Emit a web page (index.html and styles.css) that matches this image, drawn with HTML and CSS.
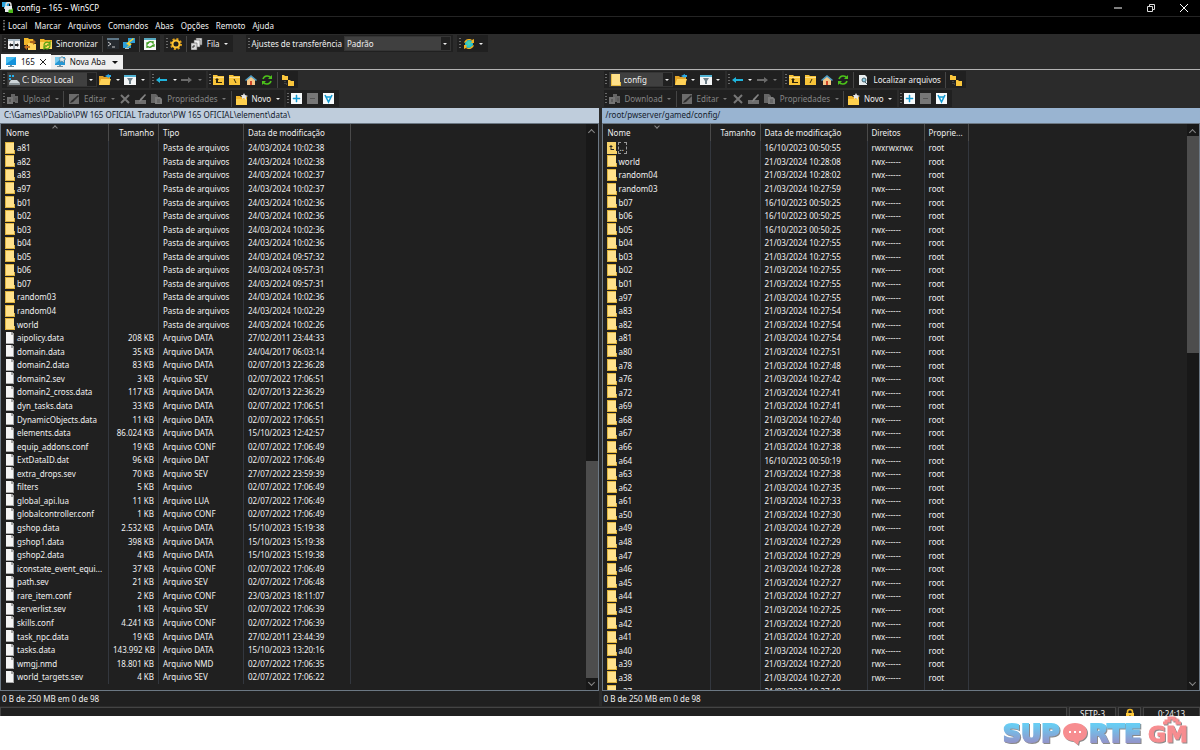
FILE: index.html
```html
<!DOCTYPE html>
<html lang="pt-BR">
<head>
<meta charset="utf-8">
<title>config – 165 – WinSCP</title>
<link rel="stylesheet" href="styles.css">
</head>
<body>
<svg class="sprite" aria-hidden="true">
  <symbol id="app" viewBox="0 0 12 12"><rect width="7" height="5" fill="#2ba3dc"/><path d="M2 5h3v2H2z" fill="#9fc4d8"/><path d="M4 4V3a2.500 2.500 0 0 1 5 0v1" fill="none" stroke="#ddd" stroke-width="1.500"/><rect x="3" y="4" width="7" height="6" fill="#e8ecef"/><path d="M6 11l1-1-1-1 2-2 1 1 2-2v5z" fill="#4cb81c"/></symbol>
  <symbol id="compare" viewBox="0 0 12 12"><path d="M0 1h12v10H0z" fill="#f4f4f4"/><path d="M0 1h12v2H0z" fill="#a9b9c4"/><path d="M5 3h2v8H5z" fill="#a9b3b9"/><path d="M1 7l2-2v1h2v2H3v1zM11 7L9 5v1H7v2h2v1z" fill="#222"/></symbol>
  <symbol id="syncdirs" viewBox="0 0 12 12"><path d="M0 0h4l1 1h4v6H0z" fill="#f4b92a"/><path d="M4 5h3l1 1h4v6H4z" fill="#ffd65c"/><path d="M6 3h3V1l3 3-3 3V5H6z" fill="#a9661d"/><path d="M6 8H3V6L0 9l3 3v-2h3z" fill="#c2701d"/></symbol>
  <symbol id="sync" viewBox="0 0 12 12"><path d="M0 1h4l1 1h7v9H0z" fill="#f0b429"/><path d="M0 4h12v7H0z" fill="#ffd95e"/><path d="M4 7a3 3 0 0 1 5-2l1-1v3H7M10 8a3 3 0 0 1-5 2l-1 1V8h3" fill="none" stroke="#5aa315" stroke-width="1.300"/></symbol>
  <symbol id="console" viewBox="0 0 12 12"><path d="M0 1h12v10H0z" fill="#262b30"/><path d="M0 0h12v2H0z" fill="#5e7788"/><path d="M1 4l3 2-3 2" fill="none" stroke="#ccc"/><path d="M5 9h3" stroke="#ccc"/></symbol>
  <symbol id="putty" viewBox="0 0 12 12"><path d="M5 0h7v5H5zM0 4h8v6H0z" fill="#2c9fd9"/><path d="M2 10h4v1H2z" fill="#b6c5ce"/><path d="M10 0L3 6l3 1-4 4 7-5-3-1 5-4z" fill="#ffd42d"/></symbol>
  <symbol id="keepup" viewBox="0 0 12 12"><path d="M0 0h12v12H0z" fill="#f7f7f7"/><path d="M0 0h12v2H0z" fill="#58acc4"/><path d="M3 6q3-4 6-1V3M9 7q-3 4-6 1v2M5 5H3v2M8 8h2V6" fill="none" stroke="#3f9d20" stroke-width="1.300"/></symbol>
  <symbol id="gear" viewBox="0 0 12 12"><circle cx="6" cy="6" r="5" fill="none" stroke="#e3a11a" stroke-width="2" stroke-dasharray="2 1.900"/><circle cx="6" cy="6" r="3.500" fill="none" stroke="#ffc533" stroke-width="2"/></symbol>
  <symbol id="queue" viewBox="0 0 12 12"><path d="M5 0h6v7H5z" fill="#d7d7d7" stroke="#555" stroke-width=".6"/><path d="M3 2h6v7H3z" fill="#eee" stroke="#555" stroke-width=".6"/><path d="M0 5h6v7H0z" fill="#d9d9d9" stroke="#555" stroke-width=".6"/><path d="M2 10V8h2" fill="none" stroke="#333"/></symbol>
  <symbol id="globe" viewBox="0 0 12 12"><circle cx="6" cy="6" r="4" fill="#29c3cf"/><path d="M4 4l3-1 1 3-3 2z" fill="#4fd3a5"/><path d="M1 5a5 5 0 0 1 8-3l2-1v4H8l1-2a4 4 0 0 0-6 1zM11 7a5 5 0 0 1-8 3l-2 1V7h3L3 9a4 4 0 0 0 6-1z" fill="#f1b322"/></symbol>
  <symbol id="screen" viewBox="0 0 12 12"><path d="M1 1h10v8H1z" fill="#1593dc"/><path d="M1 1h10L1 8z" fill="#49bdf0"/><path d="M5 9h2v2H5zM3 10h6v1H3z" fill="#6e8ea0"/></symbol>
  <symbol id="newscreen" viewBox="0 0 12 12"><path d="M1 1h10v8H1z" fill="#2498d6"/><path d="M1 1h8L1 8z" fill="#7acbee"/><path d="M5 9h2v2H5zM3 10h6v1H3z" fill="#78909c"/><path d="M8 0l1 2 3 1-2 1v3L8 5 6 6V4L5 2h2z" fill="#dce6ea" stroke="#58717e" stroke-width=".5"/></symbol>
  <symbol id="drive" viewBox="0 0 12 12"><path d="M1 1h2v2H1zM4 1h2v2H4zM1 4h2v2H1z" fill="#25b3ee"/><path d="M3 6h6l3 3H1z" fill="#cfd6da"/><path d="M1 9h11v2H1z" fill="#8f989d"/></symbol>
  <symbol id="folder" viewBox="0 0 12 12"><path d="M1 0h9v9h1v3H1z" fill="#ffe18a"/><path d="M1 0h1v12H1zM10 8h1v4h-1zM1 11h10v1H1z" fill="#e9bd45"/></symbol>
  <symbol id="open" viewBox="0 0 12 12"><path d="M0 2h4l1 1h6v8H0z" fill="#e3a325"/><path d="M2 5h10l-2 6H0z" fill="#ffd257"/><path d="M6 2l4-2v1h2v2h-2v1L8 3z" fill="#2ba9e6"/></symbol>
  <symbol id="filter" viewBox="0 0 12 12"><path d="M0 1h12v10H0z" fill="#f4f6f7"/><path d="M0 1h12v2H0z" fill="#51b3d4"/><path d="M3 4h6L7 7v3H5V7z" fill="#6f8089"/></symbol>
  <symbol id="back" viewBox="0 0 12 12"><path d="M0 6l4-3v2h7v2H4v2z" fill="#20b4dc"/></symbol>
  <symbol id="forward" viewBox="0 0 12 12"><path d="M11 6L7 3v2H0v2h7v2z" fill="#6a6a6a"/></symbol>
  <symbol id="parent" viewBox="0 0 12 12"><path d="M0 1h4l1 1h6v9H0z" fill="#f9c539"/><path d="M0 3h11v1H0z" fill="#ffe08a"/><path d="M4 4L2 6h1v3h6V8H5V6h1z" fill="#32280c"/></symbol>
  <symbol id="rootdir" viewBox="0 0 12 12"><path d="M0 1h4l1 1h6v9H0z" fill="#f9c539"/><path d="M0 3h11v1H0z" fill="#ffe08a"/><path d="M5 5l2 4" stroke="#32280c"/></symbol>
  <symbol id="rootslash" viewBox="0 0 12 12"><path d="M0 1h4l1 1h6v9H0z" fill="#f9c539"/><path d="M0 3h11v1H0z" fill="#ffe08a"/><path d="M7 5L5 9" stroke="#32280c"/></symbol>
  <symbol id="home" viewBox="0 0 12 12"><path d="M2 5l4-3 4 3v6H2z" fill="#f5c88a"/><path d="M0 6l6-5 6 5-1 1-5-4-5 4z" fill="#4e9dc4"/><path d="M5 7h2v4H5z" fill="#d1482a"/></symbol>
  <symbol id="refresh" viewBox="0 0 12 12"><path d="M2 5a4.500 4.500 0 0 1 8-1M10 7a4.500 4.500 0 0 1-8 1" fill="none" stroke="#4cc21a" stroke-width="1.600"/><path d="M11 1v4H7zM1 11V7h4z" fill="#4cc21a"/></symbol>
  <symbol id="tree" viewBox="0 0 12 12"><path d="M0 1h2l1 1h3v4H0zM6 6h2l1 1h3v5H6z" fill="#fbc73d"/><path d="M3 7v3h3" fill="none" stroke="#666" stroke-dasharray="1 1"/></symbol>
  <symbol id="transfer" viewBox="0 0 12 12"><path d="M4 1h4v2h3v7H8V9H4z" fill="#666"/><path d="M0 4h6v7H0z" fill="#757575"/><path d="M2 6h2v3H2zM8 5h2v3H8z" fill="#5b5b5b"/></symbol>
  <symbol id="edit" viewBox="0 0 12 12"><path d="M1 1h10v10H1z" fill="#6b6b6b"/><path d="M10 2l1 1-6 6-3 1 1-2z" fill="#2c2c2c"/></symbol>
  <symbol id="delete" viewBox="0 0 12 12"><path d="M2 2l8 8M10 2l-8 8" stroke="#777" stroke-width="2"/></symbol>
  <symbol id="rename" viewBox="0 0 12 12"><path d="M0 7h11v4H0z" fill="#6e6e6e"/><path d="M10 1l1 1-5 6-2 1 1-3z" fill="#858585"/></symbol>
  <symbol id="props" viewBox="0 0 12 12"><path d="M0 1h5l2 2v7H0z" fill="#666"/><path d="M4 4h5l2 2v5H4z" fill="#7c7c7c"/><path d="M6 7h3M6 9h3" stroke="#555"/></symbol>
  <symbol id="new" viewBox="0 0 12 12"><path d="M0 3h4l1 1h6v8H0z" fill="#f2b52b"/><path d="M0 6h11v6H0z" fill="#ffd04d"/><path d="M8 0l1 2 3 1-2 1v3L8 5 6 6V4L5 2h2z" fill="#e8e8e8"/></symbol>
  <symbol id="plus" viewBox="0 0 12 12"><path d="M0 0h11v11H0z" fill="#f7fafb"/><path d="M5 2h1v3h3v1H6v3H5V6H2V5h3z" fill="#159bd2" stroke="#159bd2" stroke-width=".5"/></symbol>
  <symbol id="minus" viewBox="0 0 12 12"><path d="M0 0h11v11H0z" fill="#777"/><path d="M3 5h5v1H3z" fill="#555"/></symbol>
  <symbol id="selfilter" viewBox="0 0 12 12"><path d="M0 0h11v11H0z" fill="#f7fafb"/><path d="M2 2l3.500 7L9 2M3 4h5" fill="none" stroke="#159bd2" stroke-width="1.600"/></symbol>
  <symbol id="find" viewBox="0 0 12 12"><path d="M1 1h6l2 2v8H1z" fill="#e9eef0"/><circle cx="6" cy="6" r="2" fill="#8ed1ea" stroke="#47616d"/><path d="M7 8l2 2" stroke="#47616d"/></symbol>
</svg>
<main class="window">
  <header class="titlebar">
    <svg class="icon"><use href="#app"/></svg><h1>config – 165 – WinSCP</h1>
    <div class="controls">
      <button aria-label="Minimizar"><svg viewBox="0 0 8 8"><path d="M0 4h8" stroke="#fff"/></svg></button>
      <button aria-label="Restaurar"><svg viewBox="0 0 8 8"><path d="M.5 2.500h5v5h-5zM2.500 2V.5h5v5H6" fill="none" stroke="#ddd"/></svg></button>
      <button aria-label="Fechar"><svg viewBox="0 0 8 8"><path d="M0 0l8 8M8 0L0 8" stroke="#fff"/></svg></button>
    </div>
  </header>
  <nav class="menubar"><i class="grip"></i><button>Local</button><button>Marcar</button><button>Arquivos</button><button>Comandos</button><button>Abas</button><button>Opções</button><button>Remoto</button><button>Ajuda</button></nav>
  <div class="bars main-bars">
    <div class="bar"><i class="grip"></i><button aria-label="Comparar"><svg class="icon"><use href="#compare"/></svg></button><button aria-label="Sincronizar pastas"><svg class="icon"><use href="#syncdirs"/></svg></button><button><svg class="icon"><use href="#sync"/></svg>Sincronizar</button><i class="sep"></i><button aria-label="Console"><svg class="icon"><use href="#console"/></svg></button><button aria-label="PuTTY"><svg class="icon"><use href="#putty"/></svg></button><i class="sep"></i><button aria-label="Manter atualizado"><svg class="icon"><use href="#keepup"/></svg></button></div>
    <div class="bar"><i class="grip"></i><button aria-label="Preferências"><svg class="icon"><use href="#gear"/></svg></button><i class="sep"></i><button><svg class="icon"><use href="#queue"/></svg>Fila</button><button class="caret" aria-label="Opções da fila"></button></div>
    <div class="bar presets"><i class="grip"></i><label for="preset">Ajustes de transferência</label><span class="combo wide"><select id="preset"><option>Padrão</option></select></span></div>
    <div class="bar"><i class="grip"></i><button aria-label="Reconectar"><svg class="icon"><use href="#globe"/></svg></button><button class="caret" aria-label="Opções de conexão"></button></div>
  </div>
  <div class="tabs"><button class="tab active"><svg class="icon"><use href="#screen"/></svg>165<svg class="close" viewBox="0 0 6 6"><path d="M0 0l6 6M6 0L0 6" stroke="#222"/></svg></button><button class="tab"><svg class="icon"><use href="#newscreen"/></svg>Nova Aba<i class="down"></i></button></div>
  <div class="panes">
    <section class="pane local">
      <div class="bars">
        <div class="bar"><i class="grip"></i><span class="combo drive"><svg class="icon"><use href="#drive"/></svg><select aria-label="Unidade"><option>C: Disco Local</option></select></span><button aria-label="Abrir pasta"><svg class="icon"><use href="#open"/></svg></button><button class="caret" aria-label="Mais pastas"></button><button aria-label="Filtro"><svg class="icon"><use href="#filter"/></svg></button><button class="caret" aria-label="Mais filtros"></button></div>
        <div class="bar"><i class="grip"></i><button aria-label="Voltar"><svg class="icon"><use href="#back"/></svg></button><button class="caret" aria-label="Histórico"></button><button aria-label="Avançar" disabled><svg class="icon"><use href="#forward"/></svg></button><button class="caret" aria-label="Próximos" disabled></button></div>
        <div class="bar"><i class="grip"></i><button aria-label="Pasta acima"><svg class="icon"><use href="#parent"/></svg></button><button aria-label="Raiz"><svg class="icon"><use href="#rootdir"/></svg></button><button aria-label="Início"><svg class="icon"><use href="#home"/></svg></button><button aria-label="Atualizar"><svg class="icon"><use href="#refresh"/></svg></button><i class="sep"></i><button aria-label="Árvore"><svg class="icon"><use href="#tree"/></svg></button></div>
      </div>
      <div class="bars">
        <div class="bar"><i class="grip"></i><button disabled><svg class="icon"><use href="#transfer"/></svg>Upload</button><button class="caret" aria-label="Opções de upload" disabled></button><i class="sep"></i><button disabled><svg class="icon"><use href="#edit"/></svg>Editar</button><button class="caret" aria-label="Opções de edição" disabled></button><button aria-label="Apagar" disabled><svg class="icon"><use href="#delete"/></svg></button><button aria-label="Renomear" disabled><svg class="icon"><use href="#rename"/></svg></button><button disabled><svg class="icon"><use href="#props"/></svg>Propriedades</button><button class="caret" aria-label="Mais propriedades" disabled></button><i class="sep"></i><button><svg class="icon"><use href="#new"/></svg>Novo</button><button class="caret" aria-label="Opções de novo"></button></div>
        <div class="bar"><i class="grip"></i><button aria-label="Selecionar"><svg class="icon"><use href="#plus"/></svg></button><button aria-label="Desmarcar" disabled><svg class="icon"><use href="#minus"/></svg></button><button aria-label="Filtrar seleção"><svg class="icon"><use href="#selfilter"/></svg></button></div>
      </div>
      <p class="path">C:\Games\PDablio\PW 165 OFICIAL Tradutor\PW 165 OFICIAL\element\data\</p>
      <div class="list">
        <div class="rows">
          <table>
            <thead><tr><th class="c-name">Nome<i class="sort up"></i></th><th class="c-size">Tamanho</th><th class="c-type">Tipo</th><th class="c-date">Data de modificação</th><th></th></tr></thead>
            <tbody id="local-rows"></tbody>
          </table>
        </div>
        <div class="scroll at-end"><i class="chev up"></i><div class="track"><div class="thumb"></div></div><i class="chev"></i></div>
      </div>
      <p class="status">0 B de 250 MB em 0 de 98</p>
    </section>
    <section class="pane remote">
      <div class="bars">
        <div class="bar"><i class="grip"></i><span class="combo"><svg class="icon"><use href="#folder"/></svg><select aria-label="Pasta remota"><option>config</option></select></span><button aria-label="Abrir pasta remota"><svg class="icon"><use href="#open"/></svg></button><button class="caret" aria-label="Mais pastas remotas"></button><button aria-label="Filtro remoto"><svg class="icon"><use href="#filter"/></svg></button><button class="caret" aria-label="Mais filtros remotos"></button></div>
        <div class="bar"><i class="grip"></i><button aria-label="Voltar"><svg class="icon"><use href="#back"/></svg></button><button class="caret" aria-label="Histórico"></button><button aria-label="Avançar" disabled><svg class="icon"><use href="#forward"/></svg></button><button class="caret" aria-label="Próximos" disabled></button></div>
        <div class="bar"><i class="grip"></i><button aria-label="Pasta acima"><svg class="icon"><use href="#parent"/></svg></button><button aria-label="Raiz"><svg class="icon"><use href="#rootslash"/></svg></button><button aria-label="Início"><svg class="icon"><use href="#home"/></svg></button><button aria-label="Atualizar"><svg class="icon"><use href="#refresh"/></svg></button><i class="sep"></i><button><svg class="icon"><use href="#find"/></svg>Localizar arquivos</button><i class="sep"></i><button aria-label="Árvore"><svg class="icon"><use href="#tree"/></svg></button></div>
      </div>
      <div class="bars">
        <div class="bar"><i class="grip"></i><button disabled><svg class="icon"><use href="#transfer"/></svg>Download</button><button class="caret" aria-label="Opções de download" disabled></button><i class="sep"></i><button disabled><svg class="icon"><use href="#edit"/></svg>Editar</button><button class="caret" aria-label="Opções de edição" disabled></button><button aria-label="Apagar" disabled><svg class="icon"><use href="#delete"/></svg></button><button aria-label="Renomear" disabled><svg class="icon"><use href="#rename"/></svg></button><button disabled><svg class="icon"><use href="#props"/></svg>Propriedades</button><button class="caret" aria-label="Mais propriedades" disabled></button><i class="sep"></i><button><svg class="icon"><use href="#new"/></svg>Novo</button><button class="caret" aria-label="Opções de novo"></button></div>
        <div class="bar"><i class="grip"></i><button aria-label="Selecionar"><svg class="icon"><use href="#plus"/></svg></button><button aria-label="Desmarcar" disabled><svg class="icon"><use href="#minus"/></svg></button><button aria-label="Filtrar seleção"><svg class="icon"><use href="#selfilter"/></svg></button></div>
      </div>
      <p class="path">/root/pwserver/gamed/config/</p>
      <div class="list">
        <div class="rows">
          <table>
            <thead><tr><th class="c-name">Nome<i class="sort"></i></th><th class="c-size">Tamanho</th><th class="c-date">Data de modificação</th><th class="c-rights">Direitos</th><th class="c-owner">Proprie...</th><th></th></tr></thead>
            <tbody id="remote-rows"></tbody>
          </table>
        </div>
        <div class="scroll"><i class="chev up"></i><div class="track"><div class="thumb"></div></div><i class="chev"></i></div>
      </div>
      <p class="status">0 B de 250 MB em 0 de 98</p>
    </section>
  </div>
  <footer class="session"><span class="cell grow"></span><span class="cell protocol">SFTP-3</span><span class="cell lock"><svg viewBox="0 0 10 12"><path d="M2.500 6V4a2.500 2.500 0 0 1 5 0v2" fill="none" stroke="#f0b828" stroke-width="1.600"/><path d="M1 5h8v7H1z" fill="#ffc93b"/><path d="M4.500 7h1v3h-1z" fill="#553c00"/></svg></span><span class="cell time">0:24:13</span></footer>
</main>
<aside class="brand">
  <svg viewBox="0 0 190 34" role="img" aria-label="SUPORTEGM">
    <defs><linearGradient id="sky" x1="0" y1="0" x2="0" y2="1"><stop offset=".2" stop-color="#68cdf3"/><stop offset=".85" stop-color="#9591c8"/></linearGradient></defs>
    <g class="blue"><text x="2" y="26">SUP</text><text x="88" y="26">RTE</text></g>
    <path d="M74 7c7 0 12 4 12 9s-3 8-8 9l-1 4-5-4c-6 0-10-4-10-9s5-9 12-9z" fill="#f78d90"/>
    <path d="M68 15h2v2h-2zM73 15h2v2h-2zM78 15h2v2h-2z" fill="#fff"/>
    <text class="pink" x="147" y="26">GM</text>
    <path d="M162 7h3V5h3V2h5v2h3v3h4" fill="none" stroke="#f78d90" stroke-width="3"/>
  </svg>
</aside>
<script src="script.js"></script>
</body>
</html>
```
FILE: styles.css
```css
* { box-sizing: border-box; }
body { margin: 0; height: 100vh; display: flex; flex-direction: column; background: #fff; color: #f0f0f0; font-family: "Noto Sans", "Open Sans", sans-serif; font-size: 8px; line-height: 12px; }
h1, p { margin: 0; font-size: 8px; font-weight: 400; }
button, select { font: inherit; color: inherit; background: none; border: 0; margin: 0; padding: 0; }
svg { display: block; flex: none; }
.sprite { position: absolute; width: 0; height: 0; }
.icon { width: 12px; height: 12px; }
.window { flex: 1; min-height: 0; display: flex; flex-direction: column; overflow: hidden; background: #2b2b2b; }

.titlebar { display: flex; align-items: center; height: 16px; flex: none; padding-left: 2px; gap: 3px; background: #000; color: #fff; }
.controls { display: flex; margin-left: auto; }
.controls button { display: grid; place-items: center; width: 33px; height: 15px; }
.controls svg { width: 8px; height: 8px; }
.menubar { display: flex; align-items: center; gap: 7px; height: 18px; flex: none; padding-left: 3px; background: #000; border-top: 1px solid #242424; }
.menubar .grip { margin-right: -4px; }

.grip { flex: none; width: 2px; height: 11px; background: repeating-linear-gradient(#6a6a6a 0 1px, #202020 1px 3px); }
.bars { display: flex; gap: 2px; flex: none; height: 19px; padding: 1px 0 0 2px; }
.bar { display: flex; align-items: center; height: 17px; padding: 0 2px 0 1px; background: #202020; white-space: nowrap; }
.bar button { display: flex; align-items: center; gap: 4px; height: 16px; padding: 0 2px; }
.bar button:disabled { color: #858585; }
.bar .caret { width: 9px; padding: 0; justify-content: center; }
.caret::after, .combo::after { content: ""; border: 2px solid transparent; border-top-color: #f0f0f0; border-bottom: 0; }
.caret:disabled::after { border-top-color: #777; }
.sep { width: 1px; height: 16px; margin: 0 2px; background: #454545; }
.combo { display: flex; align-items: center; height: 15px; margin-left: 2px; background: linear-gradient(to left, #202020 9px, #404040 9px); border: 1px solid #353535; padding-right: 3px; }
.combo select { appearance: none; flex: 1; min-width: 43px; padding: 0 2px; }
.drive select { min-width: 69px; }
.wide select { min-width: 98px; }
.main-bars { height: 20px; gap: 4px; }
.main-bars .bar { padding-left: 2px; }
.presets { margin-left: 9px; }
.presets .grip { margin-right: 2px; }

.tabs { display: flex; align-items: flex-end; flex: none; height: 16px; padding-left: 1px; border-bottom: 1px solid #b4b4b4; color: #111; }
.tab { display: flex; align-items: center; gap: 4px; height: 14px; padding: 0 5px 0 3px; background: #efefef; }
.tab.active { height: 15px; padding: 0 5px 0 4px; background: #fff; }
.tab .close { width: 6px; height: 6px; margin-left: 1px; }
.down { margin-left: 2px; border: 3px solid transparent; border-top-color: #111; border-bottom: 0; }

.panes { display: flex; gap: 3px; flex: 1; min-height: 0; }
.pane { display: flex; flex-direction: column; flex: 1; min-width: 0; }
.path { flex: none; height: 15px; padding: 1px 4px; color: #14202c; background: #bfcddc; }
.remote .path { background: #99b4d1; }
.list { display: flex; flex: 1; min-height: 0; background: #202020; border: 1px solid #6c7884; }
.rows { flex: 1; min-width: 0; overflow: hidden; }
table { width: 100%; height: 560px; border-collapse: separate; border-spacing: 0; table-layout: fixed; }
.remote table { height: 574px; }
th { position: relative; height: 17px; padding: 0 4px; font-weight: 400; text-align: left; border-right: 1px solid #4a4a4a; }
td { padding: 0 4px; line-height: 13px; white-space: nowrap; overflow: hidden; border-right: 1px solid #33373e; }
th:first-child { padding-left: 5px; }
th:last-child, td:last-child { border-right: 0; }
th:nth-child(2), td:nth-child(2) { text-align: right; }
.c-name { width: 108px; }
.c-size { width: 50px; }
.c-type { width: 85px; }
.c-date { width: 107px; }
.c-rights { width: 57px; }
.c-owner { width: 44px; }
.name { display: flex; align-items: center; gap: 2px; }
.name .icon { width: 10px; height: 12px; }
.focus { outline: 1px dashed #999; padding: 0 2px 0 1px; line-height: 10px; }
.sort { position: absolute; left: 52px; top: 0; width: 4px; height: 4px; border: solid #888; border-width: 0 1px 1px 0; transform: rotate(45deg); }
.sort.up { top: 2px; transform: rotate(225deg); }
.scroll { display: flex; flex-direction: column; width: 12px; background: #181818; }
.chev { flex: none; width: 5px; height: 5px; margin: 2px 0 5px 3px; border: solid #888; border-width: 0 1px 1px 0; transform: rotate(45deg); }
.chev.up { margin: 6px 0 1px 3px; transform: rotate(225deg); }
.track { display: flex; flex-direction: column; flex: 1; }
.thumb { height: 40%; background: #4d4d4d; }
.at-end .track { justify-content: flex-end; }
.status { flex: none; height: 15px; padding: 2px; background: #202020; }

.session { display: flex; gap: 2px; flex: none; height: 9px; margin-top: 1px; background: #2b2b2b; overflow: hidden; }
.cell { height: 16px; background: #202020; border: 1px solid #444; text-align: center; }
.grow { flex: 1; }
.protocol { width: 47px; }
.lock { width: 23px; display: grid; justify-content: center; }
.lock svg { width: 10px; height: 12px; }
.time { width: 57px; }

.brand { flex: none; display: flex; justify-content: flex-end; height: 34px; padding-right: 9px; }
.brand svg { width: 190px; height: 34px; filter: drop-shadow(1px 1px 0 #8a8a8a); }
.brand text { font: 700 25px "DejaVu Sans", sans-serif; }
.blue text { fill: url(#sky); stroke: url(#sky); stroke-width: 2; }
.brand .pink { font-size: 22px; fill: #f78d90; stroke: #f78d90; stroke-width: 1; }
```
FILE: script.js
```js
const localRows = `a81||Pasta de arquivos|24/03/2024 10:02:38
a82||Pasta de arquivos|24/03/2024 10:02:38
a83||Pasta de arquivos|24/03/2024 10:02:37
a97||Pasta de arquivos|24/03/2024 10:02:37
b01||Pasta de arquivos|24/03/2024 10:02:36
b02||Pasta de arquivos|24/03/2024 10:02:36
b03||Pasta de arquivos|24/03/2024 10:02:36
b04||Pasta de arquivos|24/03/2024 10:02:36
b05||Pasta de arquivos|24/03/2024 09:57:32
b06||Pasta de arquivos|24/03/2024 09:57:31
b07||Pasta de arquivos|24/03/2024 09:57:31
random03||Pasta de arquivos|24/03/2024 10:02:36
random04||Pasta de arquivos|24/03/2024 10:02:29
world||Pasta de arquivos|24/03/2024 10:02:26
aipolicy.data|208 KB|Arquivo DATA|27/02/2011 23:44:33
domain.data|35 KB|Arquivo DATA|24/04/2017 06:03:14
domain2.data|83 KB|Arquivo DATA|02/07/2013 22:36:28
domain2.sev|3 KB|Arquivo SEV|02/07/2022 17:06:51
domain2_cross.data|117 KB|Arquivo DATA|02/07/2013 22:36:29
dyn_tasks.data|33 KB|Arquivo DATA|02/07/2022 17:06:51
DynamicObjects.data|11 KB|Arquivo DATA|02/07/2022 17:06:51
elements.data|86.024 KB|Arquivo DATA|15/10/2023 12:42:57
equip_addons.conf|19 KB|Arquivo CONF|02/07/2022 17:06:49
ExtDataID.dat|96 KB|Arquivo DAT|02/07/2022 17:06:49
extra_drops.sev|70 KB|Arquivo SEV|27/07/2022 23:59:39
filters|5 KB|Arquivo|02/07/2022 17:06:49
global_api.lua|11 KB|Arquivo LUA|02/07/2022 17:06:49
globalcontroller.conf|1 KB|Arquivo CONF|02/07/2022 17:06:49
gshop.data|2.532 KB|Arquivo DATA|15/10/2023 15:19:38
gshop1.data|398 KB|Arquivo DATA|15/10/2023 15:19:38
gshop2.data|4 KB|Arquivo DATA|15/10/2023 15:19:38
iconstate_event_equi...|37 KB|Arquivo CONF|02/07/2022 17:06:49
path.sev|21 KB|Arquivo SEV|02/07/2022 17:06:48
rare_item.conf|2 KB|Arquivo CONF|23/03/2023 18:11:07
serverlist.sev|1 KB|Arquivo SEV|02/07/2022 17:06:39
skills.conf|4.241 KB|Arquivo CONF|02/07/2022 17:06:39
task_npc.data|19 KB|Arquivo DATA|27/02/2011 23:44:39
tasks.data|143.992 KB|Arquivo DATA|15/10/2023 13:20:16
wmgj.nmd|18.801 KB|Arquivo NMD|02/07/2022 17:06:35
world_targets.sev|4 KB|Arquivo SEV|02/07/2022 17:06:22`;

const remoteRows = `..|16/10/2023 00:50:55|rwxrwxrwx
world|21/03/2024 10:28:08
random04|21/03/2024 10:28:02
random03|21/03/2024 10:27:59
b07|16/10/2023 00:50:25
b06|16/10/2023 00:50:25
b05|16/10/2023 00:50:25
b04|21/03/2024 10:27:55
b03|21/03/2024 10:27:55
b02|21/03/2024 10:27:55
b01|21/03/2024 10:27:55
a97|21/03/2024 10:27:55
a83|21/03/2024 10:27:54
a82|21/03/2024 10:27:54
a81|21/03/2024 10:27:54
a80|21/03/2024 10:27:51
a78|21/03/2024 10:27:48
a76|21/03/2024 10:27:42
a72|21/03/2024 10:27:41
a69|21/03/2024 10:27:41
a68|21/03/2024 10:27:40
a67|21/03/2024 10:27:38
a66|21/03/2024 10:27:38
a64|16/10/2023 00:50:19
a63|21/03/2024 10:27:38
a62|21/03/2024 10:27:35
a61|21/03/2024 10:27:33
a50|21/03/2024 10:27:30
a49|21/03/2024 10:27:29
a48|21/03/2024 10:27:29
a47|21/03/2024 10:27:29
a46|21/03/2024 10:27:28
a45|21/03/2024 10:27:27
a44|21/03/2024 10:27:27
a43|21/03/2024 10:27:25
a42|21/03/2024 10:27:20
a41|21/03/2024 10:27:20
a40|21/03/2024 10:27:20
a39|21/03/2024 10:27:20
a38|21/03/2024 10:27:20
a37|21/03/2024 10:27:19`;

const shapes = {
  folder: '<path d="M0 0h9v9h1v3H0z" fill="#ffe28c"/><path d="M0 0h1v12H0zM9 8h1v4H9zM0 11h10v1H0zM0 0h9v1H0z" fill="#dfb440"/>',
  up: '<path d="M0 0h9v9h1v3H0z" fill="#f7d36c"/><path d="M4 3L2 5h1.500v3H7V7H4.500V5H6z" fill="#222"/>',
  file: '<path d="M1 0h6l2 2v10H1z" fill="#f5f5f5"/><path d="M7 0l2 2v1H6V0zM8 3h1v9H1v-1h7z" fill="#a9a9a9"/>'
};
const nameCell = (name, kind) =>
  `<td><span class="name"><svg class="icon" viewBox="0 0 10 12">${shapes[kind]}</svg><span class="${kind === "up" ? "focus" : ""}">${name}</span></span></td>`;
const row = (name, kind, cells) =>
  `<tr>${nameCell(name, kind)}${cells.map(c => `<td>${c}</td>`).join("")}<td></td></tr>`;

document.getElementById("local-rows").innerHTML = localRows.split("\n").map(line => {
  const [name, ...cells] = line.split("|");
  return row(name, cells[0] ? "file" : "folder", cells);
}).join("");

document.getElementById("remote-rows").innerHTML = remoteRows.split("\n").map(line => {
  const [name, date, rights = "rwx------"] = line.split("|");
  return row(name, name === ".." ? "up" : "folder", ["", date, rights, "root"]);
}).join("");
```
